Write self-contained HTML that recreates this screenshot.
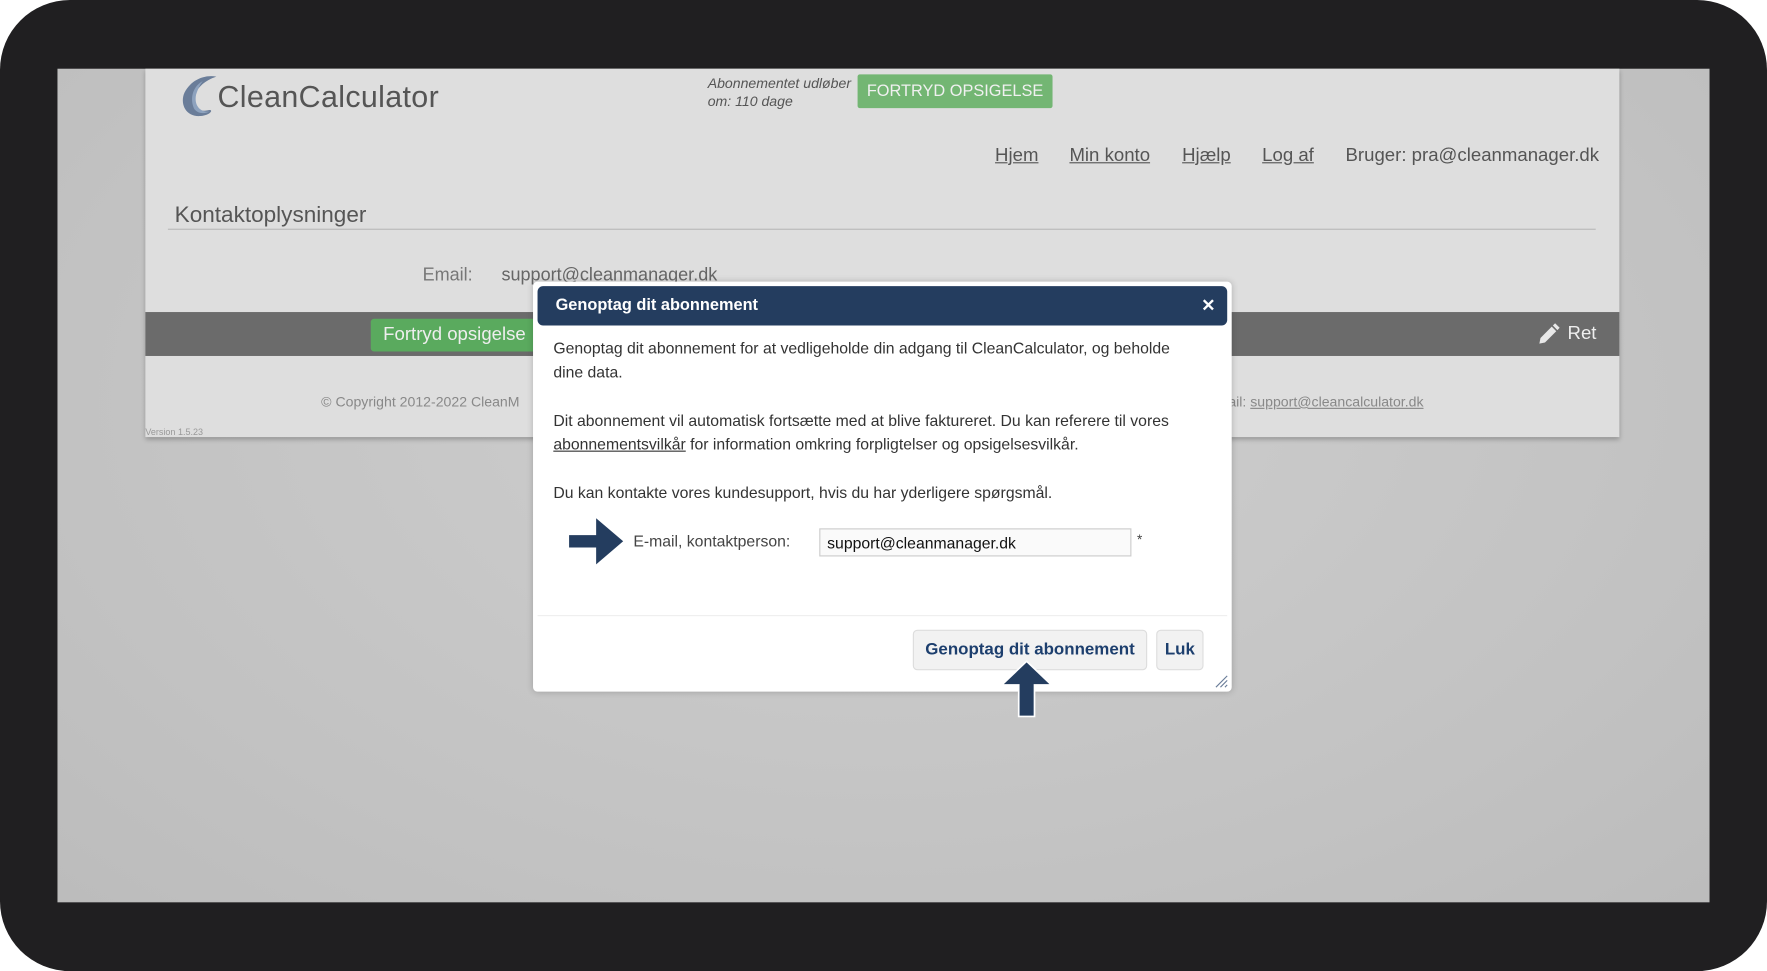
<!DOCTYPE html>
<html><head><meta charset="utf-8"><style>
*{margin:0;padding:0;box-sizing:border-box}
html,body{width:1767px;height:971px;overflow:hidden;background:#fff}
#w{position:absolute;left:0;top:0;width:1568px;height:862px;transform:scale(1.12691,1.1265);transform-origin:0 0;font-family:"Liberation Sans",sans-serif}
.a{position:absolute;white-space:nowrap}
#frame{left:0;top:0;width:1568px;height:862px;background:#201f21;border-radius:62px}
#scr{left:51px;top:61px;width:1466px;height:740px;background:radial-gradient(ellipse at 50% 40%,#cfcfcf,#c2c2c2 70%,#bcbcbc)}
#page{left:129px;top:61px;width:1308px;height:327px;background:#dedede;box-shadow:0 2px 4px rgba(0,0,0,.25)}
.g{color:#666}
</style></head><body><div id="w">
<div class="a" id="frame"></div>
<div class="a" id="scr"></div>
<div class="a" id="page"></div>
<svg class="a" style="left:160px;top:66px" width="36" height="40" viewBox="0 0 36 40"><path d="M32 2C20 0 8 6 3 18C0 28 6 38 18 37C28 36 30 30 24 32C14 34 10 26 14 16C18 8 26 4 32 2Z" fill="#6a7d99"/><path d="M20 6C12 10 8 20 12 30C14 34 20 36 26 33C18 34 12 28 14 18C16 12 18 8 20 6Z" fill="#8da2be"/></svg>
<div class="a g" style="left:193px;top:71px;font-size:27px;color:#555;letter-spacing:0.3px">CleanCalculator</div>
<div class="a g" style="left:628px;top:66px;font-size:12.5px;font-style:italic;line-height:16px;color:#555">Abonnementet udløber<br>om: 110 dage</div>
<div class="a" style="left:761px;top:66px;width:173px;height:30px;background:#73b673;border-radius:2px;font-size:14.5px;line-height:30px;text-align:center;color:#f0f0f0">FORTRYD OPSIGELSE</div>
<div class="a" style="left:883px;top:129px;font-size:16.5px;color:#555"><u>Hjem</u></div>
<div class="a" style="left:949px;top:129px;font-size:16.5px;color:#555"><u>Min konto</u></div>
<div class="a" style="left:1049px;top:129px;font-size:16.5px;color:#555"><u>Hjælp</u></div>
<div class="a" style="left:1120px;top:129px;font-size:16.5px;color:#555"><u>Log af</u></div>
<div class="a" style="left:1194px;top:129px;font-size:16.5px;color:#555">Bruger: pra@cleanmanager.dk</div>
<div class="a" style="left:155px;top:180px;font-size:20px;color:#555">Kontaktoplysninger</div>
<div class="a" style="left:149px;top:203px;width:1267px;height:1px;background:#b8b8b8"></div>
<div class="a" style="left:375px;top:236px;font-size:16px;color:#777">Email:</div>
<div class="a" style="left:445px;top:236px;font-size:16px;color:#666">support@cleanmanager.dk</div>
<div class="a" style="left:129px;top:277px;width:1308px;height:39px;background:#6b6b6b"></div>
<div class="a" style="left:329px;top:283px;width:150px;height:29px;background:#5aaa5e;border-radius:3px;color:#eee;font-size:16.5px;line-height:29px;padding-left:11px">Fortryd opsigelse</div>
<svg class="a" style="left:1364px;top:287px" width="20" height="20" viewBox="0 0 20 20"><path d="M2 18L3 13L13 3L17 7L7 17Z" fill="#e8e8e8"/><path d="M14 2L16 0L20 4L18 6Z" fill="#e8e8e8"/></svg>
<div class="a" style="left:1391px;top:287px;font-size:16.5px;color:#eee">Ret</div>
<div class="a" style="left:285px;top:350px;font-size:12.5px;color:#888">© Copyright 2012-2022 CleanM</div>
<div class="a" style="left:1090px;top:350px;font-size:12.5px;color:#888">ail: <u>support@cleancalculator.dk</u></div>
<div class="a" style="left:129px;top:379px;font-size:8px;color:#999">Version 1.5.23</div>

<div class="a" style="left:473px;top:250px;width:620px;height:364px;background:#fff;border-radius:4px;box-shadow:0 0 6px rgba(0,0,0,.2)"></div>
<div class="a" style="left:477px;top:254px;width:612px;height:35px;background:#243d5f;border-radius:5px"></div>
<div class="a" style="left:493px;top:263px;font-size:14.5px;font-weight:bold;color:#fff">Genoptag dit abonnement</div>
<div class="a" style="left:1066px;top:262px;font-size:15px;font-weight:bold;color:#fff">✕</div>
<div class="a" style="left:491px;top:299px;font-size:14px;line-height:21px;color:#333;white-space:normal;width:560px">Genoptag dit abonnement for at vedligeholde din adgang til CleanCalculator, og beholde dine data.</div>
<div class="a" style="left:491px;top:363px;font-size:14px;line-height:21px;color:#333;white-space:normal;width:590px">Dit abonnement vil automatisk fortsætte med at blive faktureret. Du kan referere til vores <u>abonnementsvilkår</u> for information omkring forpligtelser og opsigelsesvilkår.</div>
<div class="a" style="left:491px;top:427px;font-size:14px;line-height:21px;color:#333">Du kan kontakte vores kundesupport, hvis du har yderligere spørgsmål.</div>
<svg class="a" style="left:504px;top:459px" width="50" height="43" viewBox="0 0 50 43"><path d="M1 16H25V1L49 21.5L25 42V27H1Z" fill="#243d5f"/></svg>
<div class="a" style="left:562px;top:472px;font-size:14px;color:#444">E-mail, kontaktperson:</div>
<div class="a" style="left:727px;top:469px;width:277px;height:25px;border:1px solid #ccc;background:#fafafa;font-size:14px;line-height:24px;padding-left:6px;color:#111">support@cleanmanager.dk</div>
<div class="a" style="left:1009px;top:472px;font-size:12px;color:#444">*</div>
<div class="a" style="left:477px;top:546px;width:612px;height:1px;background:#eee"></div>
<div class="a" style="left:810px;top:559px;width:208px;height:36px;background:#f2f2f2;border:1px solid #ddd;border-radius:4px;font-size:15px;font-weight:bold;color:#1d3f6e;line-height:34px;text-align:center">Genoptag dit abonnement</div>
<div class="a" style="left:1026px;top:559px;width:42px;height:36px;background:#f2f2f2;border:1px solid #ddd;border-radius:4px;font-size:15px;font-weight:bold;color:#1d3f6e;line-height:34px;text-align:center">Luk</div>
<svg class="a" style="left:888px;top:586px" width="46" height="51" viewBox="0 0 46 51"><path d="M23 1L45 22H30V50H16V22H1Z" fill="#243d5f" stroke="#fff" stroke-width="1.5"/></svg>
<svg class="a" style="left:1077px;top:598px" width="14" height="13" viewBox="0 0 14 13"><path d="M2 12L12 2M6 12L12 6M10 12L12 10" stroke="#6a7d99" stroke-width="1"/></svg>
</div></body></html>
